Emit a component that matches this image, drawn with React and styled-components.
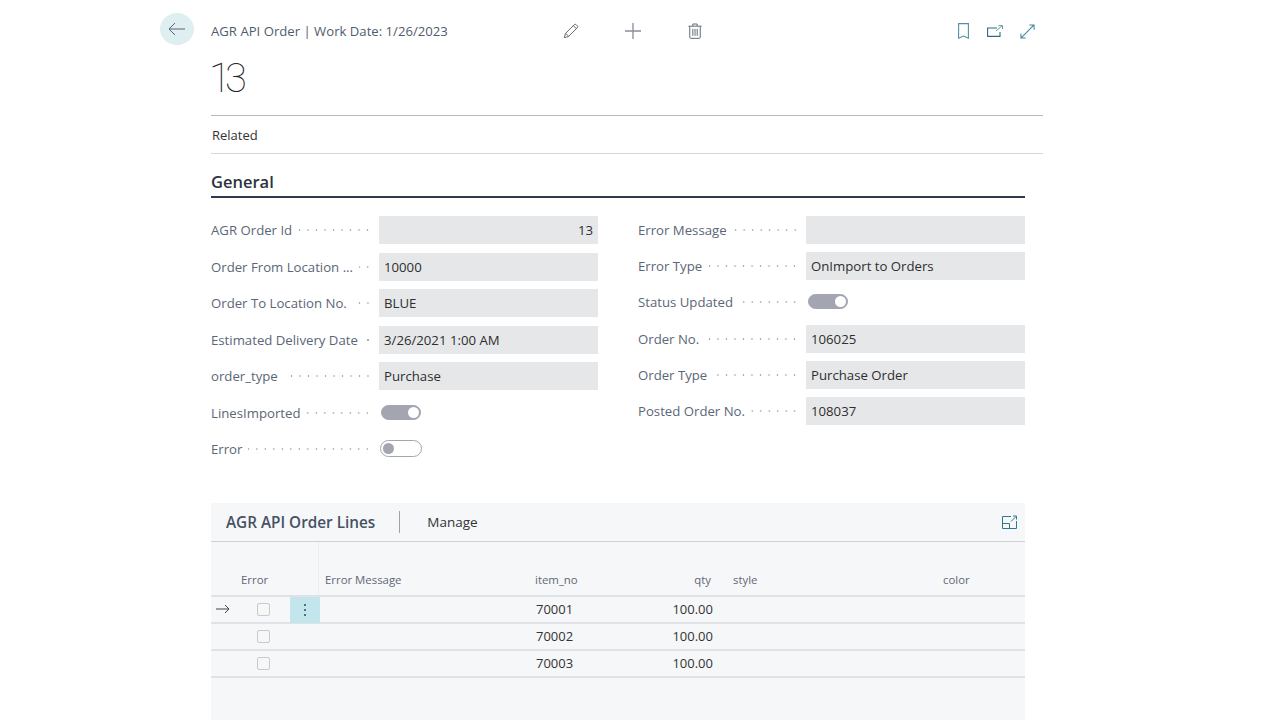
import styled, { createGlobalStyle } from 'styled-components';

const GlobalStyle = createGlobalStyle`
  html, body {
    margin: 0;
    padding: 0;
    background: #fff;
    font-family: "Open Sans", "Noto Sans", "Liberation Sans", sans-serif;
    overflow: hidden;
  }
`;

const Page = styled.div`
  width: 1280px;
  height: 720px;
  box-sizing: border-box;
  padding: 13px 0 0 160px;
  overflow: hidden;
`;

const TopBar = styled.div`
  display: flex;
  align-items: center;
  height: 36px;
  width: 883px;
`;

const BackButton = styled.div`
  width: 34px;
  height: 32px;
  border-radius: 50%;
  background: #deeef1;
  display: flex;
  align-items: center;
  justify-content: center;
  flex: none;
  margin-right: 17px;
  align-self: flex-start;
`;

const Caption = styled.div`
  width: 336px;
  font-size: 13.15px;
  color: #505c6d;
  white-space: nowrap;
`;

const IconSlot = styled.div`
  width: ${(p) => p.$w || 62}px;
  display: flex;
  justify-content: center;
  align-items: center;
  flex: none;
`;

const Spacer = styled.div`
  flex: 1;
`;

const Body = styled.div`
  margin-left: 51px;
  width: 832px;
`;

const RecordTitle = styled.div`
  font-family: Roboto, "Open Sans", sans-serif;
  font-size: 40px;
  font-weight: 100;
  line-height: 50px;
  height: 50px;
  margin: 5px 0 0 -2px;
  color: #262626;
  letter-spacing: -6px;
`;

const Related = styled.div`
  margin-top: 11px;
  height: 39px;
  box-sizing: border-box;
  border-top: 1px solid #b9b9b9;
  border-bottom: 1px solid #d6d6d6;
  display: flex;
  align-items: center;
  padding-left: 1px;
  font-size: 13px;
  color: #333;
`;

const SectionTitle = styled.div`
  width: 814px;
  margin-top: 15px;
  height: 29px;
  box-sizing: border-box;
  border-bottom: 2px solid #2f3a4d;
  font-size: 16.5px;
  font-weight: 600;
  line-height: 26px;
  color: #2b3340;
`;

const FieldGrid = styled.div`
  width: 814px;
  margin-top: 18px;
  display: grid;
  grid-template-columns: 387px 387px;
  column-gap: 40px;
`;

const Column = styled.div`
  display: flex;
  flex-direction: column;
  margin-top: ${(p) => p.$top || 0}px;
`;

const Row = styled.div`
  display: flex;
  align-items: flex-start;
  height: ${(p) => p.$h || 36.5}px;
`;

const LabelWrap = styled.div`
  width: 168px;
  height: 28px;
  display: flex;
  align-items: center;
  flex: none;
  padding-right: 7px;
  box-sizing: border-box;
`;

const Label = styled.span`
  font-size: 13.2px;
  color: #5b6677;
  white-space: nowrap;
`;

const Leader = styled.span`
  flex: 1;
  min-width: 0;
  height: 4px;
  margin-left: 6px;
  background-image: radial-gradient(circle, #a9adb5 0.8px, transparent 1.1px);
  background-size: 8.5px 4px;
  background-repeat: repeat-x;
  background-position: right center;
`;

const ValueBox = styled.div`
  flex: 1;
  height: 28px;
  box-sizing: border-box;
  background: #e6e7e9;
  padding: 0 5px;
  display: flex;
  align-items: center;
  justify-content: ${(p) => (p.$right ? 'flex-end' : 'flex-start')};
  font-size: 13.2px;
  color: #2e2e2e;
  white-space: nowrap;
`;

const ToggleTrack = styled.div`
  width: ${(p) => (p.$on ? 40 : 42)}px;
  height: ${(p) => (p.$on ? 15 : 17)}px;
  margin: ${(p) => (p.$on ? '6px 0 0 2px' : '5px 0 0 1px')};
  box-sizing: border-box;
  border-radius: 9px;
  position: relative;
  background: ${(p) => (p.$on ? '#a3a6b0' : '#fff')};
  border: 1px solid #a3a6b0;
  &::after {
    content: '';
    position: absolute;
    top: ${(p) => (p.$on ? 1 : 2)}px;
    width: 11px;
    height: 11px;
    border-radius: 50%;
    background: ${(p) => (p.$on ? '#fff' : '#a3a6b0')};
    ${(p) => (p.$on ? 'right: 1px;' : 'left: 2px;')}
  }
`;

const LinesPanel = styled.div`
  width: 814px;
  margin-top: 31px;
  height: 230px;
  background: #f6f7f9;
`;

const PanelHeader = styled.div`
  height: 38px;
  display: flex;
  align-items: center;
  border-bottom: 1px solid #cfd1d4;
  padding: 0 8px 0 15px;
`;

const PanelTitle = styled.div`
  font-size: 15.3px;
  font-weight: 600;
  color: #465263;
  padding-right: 24px;
  border-right: 1px solid #9da3ab;
  line-height: 22px;
  white-space: nowrap;
`;

const PanelAction = styled.div`
  margin-left: 27px;
  font-size: 13.5px;
  color: #333;
`;

const TableRow = styled.div`
  display: grid;
  grid-template-columns: 24px 55px 30px 210px 110px 78px 220px 87px;
  height: ${(p) => p.$h}px;
  box-sizing: border-box;
  border-bottom: 2px solid #e0e2e5;
`;

const HeadCell = styled.div`
  align-self: end;
  padding: 0 ${(p) => (p.$right ? 7 : 0)}px 7px ${(p) => p.$pl || 5}px;
  margin-right: ${(p) => (p.$rule ? 1 : 0)}px;
  font-size: 11.4px;
  line-height: 16px;
  color: #5f6875;
  text-align: ${(p) => (p.$right ? 'right' : 'left')};
  white-space: nowrap;
  height: 100%;
  box-sizing: border-box;
  display: flex;
  align-items: flex-end;
  justify-content: ${(p) => (p.$right ? 'flex-end' : 'flex-start')};
  border-right: ${(p) => (p.$rule ? '1px solid #edeef0' : 'none')};
`;

const Cell = styled.div`
  display: flex;
  align-items: center;
  justify-content: ${(p) => (p.$right ? 'flex-end' : 'flex-start')};
  padding: 0 ${(p) => (p.$right ? 5 : 0)}px 0 ${(p) => p.$pl || 0}px;
  font-size: 13px;
  color: #333;
`;

const CheckBox = styled.div`
  width: 13px;
  height: 13px;
  box-sizing: border-box;
  border: 1px solid #c8cacc;
  border-radius: 2px;
  background: #f7f7f8;
  margin-left: 22px;
`;

const MenuCell = styled.div`
  display: flex;
  align-items: center;
  justify-content: center;
  background: ${(p) => (p.$active ? '#c2e6ec' : 'transparent')};
  margin-bottom: -1px;
`;

const Pencil = () => (
  <svg width="16" height="16" viewBox="0 0 18 18" fill="none" stroke="#5f6672" strokeWidth="1.1">
    <path d="M1.5 16.5l1.2-4.6L12.6 2a1.6 1.6 0 0 1 2.3 0l1.1 1.1a1.6 1.6 0 0 1 0 2.3L6.1 15.3z" />
    <path d="M3 11.6l3.4 3.4M11.6 3l3.4 3.4" />
  </svg>
);

const Plus = () => (
  <svg width="16" height="16" viewBox="0 0 18 18" fill="none" stroke="#8a8f99" strokeWidth="1.5">
    <path d="M9 0v18M0 9h18" />
  </svg>
);

const Trash = () => (
  <svg width="14" height="16" viewBox="0 0 16 18" fill="none" stroke="#5f6672" strokeWidth="1.1">
    <path d="M0.5 3.5h15M5.5 3.5V1h5v2.5M2 3.5v12.7c0 .7.5 1.2 1.2 1.2h9.6c.7 0 1.2-.5 1.2-1.2V3.5" />
    <path d="M5.5 6.5v8M8 6.5v8M10.5 6.5v8" />
  </svg>
);

const Bookmark = () => (
  <svg width="11" height="16" viewBox="0 0 11 16" fill="none" stroke="#54909f" strokeWidth="1.1">
    <path d="M.6.6h9.8v14.6l-4.9-2.2-4.9 2.2z" />
  </svg>
);

const OpenNew = () => (
  <svg width="16" height="12" viewBox="0 0 16 12" fill="none">
    <path d="M10 3H.6v8.4h12.4V7" stroke="#2f6b78" strokeWidth="1.1" />
    <path d="M9 6L15 .8M11.5.6h4V4" stroke="#54909f" strokeWidth=".9" />
  </svg>
);

const Expand = () => (
  <svg width="15" height="15" viewBox="0 0 16 16" fill="none" stroke="#3f8797" strokeWidth="1.1">
    <path d="M1 15L15 1M10 1h5v5M1 10v5h5" />
  </svg>
);

const PanelExpand = () => (
  <svg width="15" height="14" viewBox="0 0 15 14" fill="none" stroke="#2f7a8a" strokeWidth="1">
    <path d="M9 1.5H.5v12h14V6M.5 8.5h7v5" />
    <path d="M9 6.5l5-5M11 1h3.5v3.5" />
  </svg>
);

const Field = ({ label, value, right, toggle, on, h }) => (
  <Row $h={h}>
    <LabelWrap>
      <Label>{label}</Label>
      <Leader />
    </LabelWrap>
    {toggle ? <ToggleTrack $on={on} /> : <ValueBox $right={right}>{value}</ValueBox>}
  </Row>
);

const lines = ['70001', '70002', '70003'];

const App = () => {
  return (
    <Page>
      <GlobalStyle />
      <TopBar>
        <BackButton>
          <svg width="18" height="14" viewBox="0 0 18 14" fill="none" stroke="#5a6472" strokeWidth="1">
            <path d="M17 7H1M7 1L1 7l6 6" />
          </svg>
        </BackButton>
        <Caption>AGR API Order | Work Date: 1/26/2023</Caption>
        <IconSlot $w={48}><Pencil /></IconSlot>
        <IconSlot $w={76}><Plus /></IconSlot>
        <IconSlot $w={47}><Trash /></IconSlot>
        <Spacer />
        <IconSlot $w={32}><Bookmark /></IconSlot>
        <IconSlot $w={32}><OpenNew /></IconSlot>
        <IconSlot $w={32}><Expand /></IconSlot>
      </TopBar>
      <Body>
        <RecordTitle>13</RecordTitle>
        <Related>Related</Related>
        <SectionTitle>General</SectionTitle>
        <FieldGrid>
          <Column>
            <Field label="AGR Order Id" value="13" right />
            <Field label="Order From Location ..." value="10000" />
            <Field label="Order To Location No." value="BLUE" />
            <Field label="Estimated Delivery Date" value="3/26/2021 1:00 AM" />
            <Field label="order_type" value="Purchase" />
            <Field label="LinesImported" toggle on />
            <Field label="Error" toggle />
          </Column>
          <Column $top={-0.5}>
            <Field label="Error Message" value="" h={36.4} />
            <Field label="Error Type" value="OnImport to Orders" h={36.4} />
            <Field label="Status Updated" toggle on h={36.4} />
            <Field label="Order No." value="106025" h={36.4} />
            <Field label="Order Type" value="Purchase Order" h={36.4} />
            <Field label="Posted Order No." value="108037" h={36.4} />
          </Column>
        </FieldGrid>
        <LinesPanel>
          <PanelHeader>
            <PanelTitle>AGR API Order Lines</PanelTitle>
            <PanelAction>Manage</PanelAction>
            <Spacer />
            <PanelExpand />
          </PanelHeader>
          <TableRow $h={55}>
            <HeadCell />
            <HeadCell $pl={6}>Error</HeadCell>
            <HeadCell $rule />
            <HeadCell>Error Message</HeadCell>
            <HeadCell>item_no</HeadCell>
            <HeadCell $right>qty</HeadCell>
            <HeadCell $pl={15}>style</HeadCell>
            <HeadCell>color</HeadCell>
          </TableRow>
          {lines.map((no, i) => (
            <TableRow key={no} $h={27}>
              <Cell $pl={5}>
                {i === 0 && (
                  <svg width="14" height="10" viewBox="0 0 14 10" fill="none" stroke="#444" strokeWidth="1">
                    <path d="M0 5h13M9 1l4 4-4 4" />
                  </svg>
                )}
              </Cell>
              <Cell><CheckBox /></Cell>
              <MenuCell $active={i === 0}>
                {i === 0 && (
                  <svg width="4" height="14" viewBox="0 0 4 14" fill="#37474f">
                    <circle cx="2" cy="2" r="1" />
                    <circle cx="2" cy="7" r="1" />
                    <circle cx="2" cy="12" r="1" />
                  </svg>
                )}
              </MenuCell>
              <Cell />
              <Cell $pl={6}>{no}</Cell>
              <Cell $right>100.00</Cell>
              <Cell />
              <Cell />
            </TableRow>
          ))}
        </LinesPanel>
      </Body>
    </Page>
  );
};

export default App;
